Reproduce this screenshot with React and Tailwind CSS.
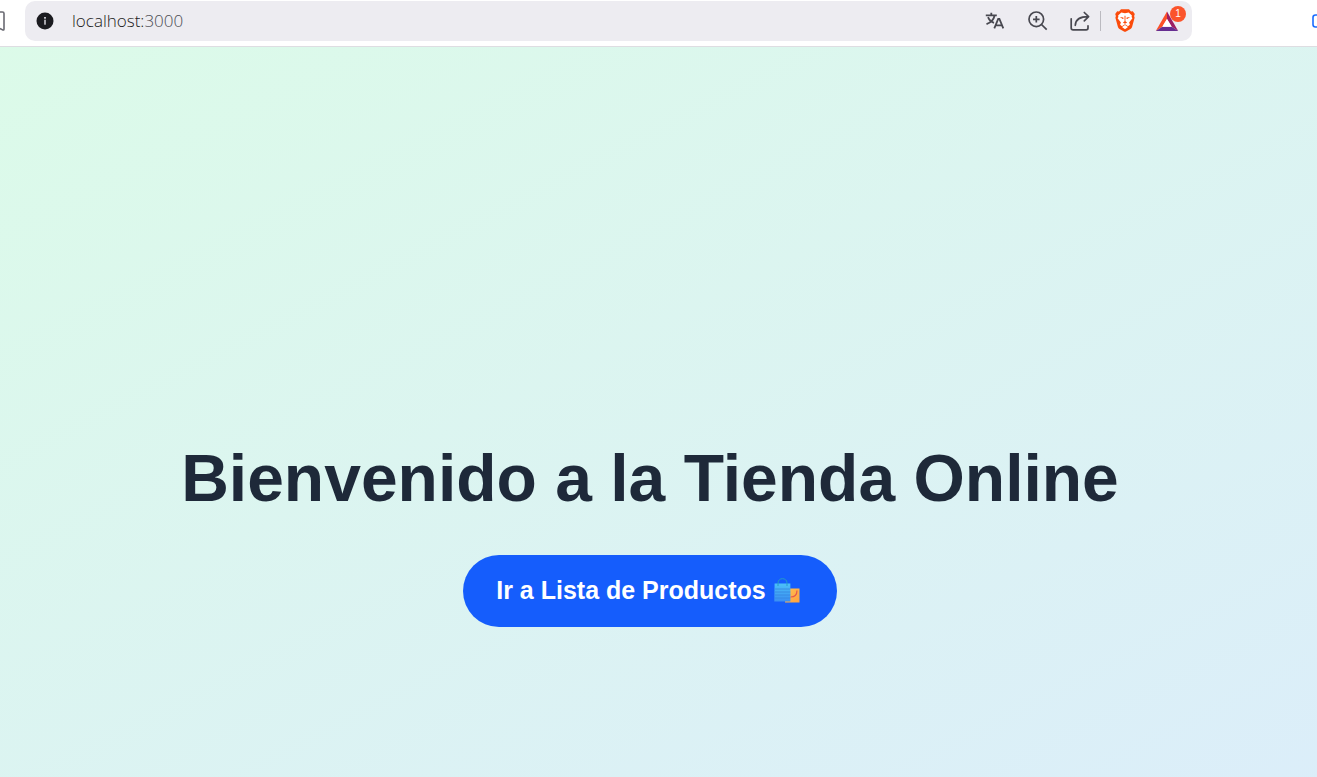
function InfoIcon() {
  return (
    <svg viewBox="0 0 18 18" className="size-[18px]" aria-hidden="true">
      <circle cx="9" cy="9" r="8.5" fill="#1b1b20" />
      <rect x="8.2" y="5" width="1.6" height="1.7" fill="#edecf1" />
      <rect x="8.2" y="7.7" width="1.6" height="5" fill="#c9c8ce" />
    </svg>
  );
}

function TranslateIcon() {
  return (
    <svg viewBox="0 0 20 20" className="size-5" fill="none" stroke="#484850" strokeWidth="1.8" aria-hidden="true">
      <path d="M.8 4.3h11M6.3 1.8v2.5M9.6 4.5C8.800 8.300 6 11.500 1.500 13.200M3 6.200C4.300 9.300 6.400 11 9 11.800" />
      <path d="M9.300 17.400l3.900-9.400h1.200l3.900 9.400M10.800 14.300h6" />
    </svg>
  );
}

function ZoomIcon() {
  return (
    <svg viewBox="0 0 20 20" className="size-5" fill="none" stroke="#484850" strokeWidth="1.700" aria-hidden="true">
      <circle cx="8.300" cy="8.300" r="7.300" />
      <path d="M13.500 13.500l5.200 5.200M8.300 5v6.600M5 8.300h6.600" />
    </svg>
  );
}

function ShareIcon() {
  return (
    <svg viewBox="0 0 20 20" className="size-5" fill="none" stroke="#484850" strokeWidth="1.700" strokeLinejoin="round" strokeLinecap="round" aria-hidden="true">
      <path d="M1.200 7.800v9.200c0 1.200.7 1.900 1.900 1.900h13c1.200 0 1.900-.7 1.900-1.900v-2.200" />
      <path d="M5.300 14.300C5.500 8.800 9 5.700 18.300 5.700M14.300 1.500l4.300 4.200-4.300 4.200" />
    </svg>
  );
}

function LionIcon() {
  return (
    <svg viewBox="0 0 20 23" className="h-[23px] w-5" aria-hidden="true">
      <path fill="#fb4b0b" d="M6 .3h8l2 2.200 1.800-.3 2 2.900-.7 2 .5 1.600-2.400 8.800c-.3 1.100-.8 1.800-1.700 2.400L10.600 22.700h-1.200l-4.900-2.800c-.9-.6-1.400-1.300-1.700-2.400L.4 8.700.9 7.100.2 5.100l2-2.900 1.800.3z" />
      <path fill="#fff" d="M6.300 3.500L10 4.200l3.700-.7 3.200 3-.3 1.500.8 1.300-3.300 4.300.8 2.200-1.900 1.500-2.400-1.700h-1.200L7 17.300l-1.900-1.500.8-2.200L2.600 9.300 3.400 8l-.3-1.500z" />
      <path fill="#fff" d="M10 16l3 1.900-3 2.400-3-2.400z" />
      <path fill="#fb4b0b" d="M4.800 7.900l3.500.7.300 1.100-.8.400zM15.200 7.900l-3.500.7-.3 1.100.8.400zM9.500 6.800h1l-.1 5.500 1.700 1.100L10 14.700l-2.100-1.300 1.700-1.100z" />
    </svg>
  );
}

function TriangleIcon() {
  return (
    <svg viewBox="0 0 24 21" className="h-[21px] w-6" aria-hidden="true">
      <path fill="#fb5028" d="M12 .5L.8 20l6.500-4.300L12 8z" />
      <path fill="#9e1f63" d="M12 .5L23.200 20l-6.500-4.300L12 8z" />
      <path fill="#662d91" d="M.8 20h22.400l-6.500-4.300H7.300z" />
      <path fill="#fff" d="M12 8l4.700 7.700H7.300z" />
    </svg>
  );
}

function BagsIcon() {
  return (
    <svg viewBox="0 0 26 26" className="h-[26px] w-[26px]" role="img" aria-label="Bolsas de compras">
      <defs>
        <linearGradient id="blueBag" x1="0" y1="0" x2="0" y2="1">
          <stop offset="0" stopColor="#4cc0f8" />
          <stop offset="1" stopColor="#3a8ff2" />
        </linearGradient>
        <linearGradient id="orangeBag" x1="0" y1="0" x2="1" y2="1">
          <stop offset="0" stopColor="#ffc052" />
          <stop offset="1" stopColor="#ffa13d" />
        </linearGradient>
      </defs>
      <path fill="url(#orangeBag)" d="M12 10.500h13.500v14H11z" />
      <path fill="none" stroke="#e5574d" strokeWidth="1.200" d="M23 12.500c0 4-2 6.500-6.500 6.500" />
      <path fill="url(#blueBag)" d="M.6 5.500h15.800v18H.3z" />
      <path stroke="#3585df" strokeWidth=".8" d="M.8 11h15.400M.8 14h15.400M.8 17h15.400M.8 20h15.400" />
      <path fill="none" stroke="#239bc8" strokeWidth="1" d="M4 8V5c0-5.800 9-5.800 9 0v3" />
    </svg>
  );
}

export default function App() {
  return (
    <div className="flex min-h-screen flex-col bg-white font-['Liberation_Sans',Arial,sans-serif]">
      <header className="flex h-[47px] items-start overflow-hidden border-b border-[#dedde2] pt-px">
        <button type="button" aria-label="Marcador" className="flex h-10 w-[25px] items-center">
          <svg viewBox="0 0 5 20" className="h-5 w-[5px]" fill="none" stroke="#6a6a72" strokeWidth="1.600" aria-hidden="true">
            <path d="M0 1h2.500Q4 1 4 2.500v15.500q0 1.500-1.400.9L0 17.500" />
          </svg>
        </button>
        <div className="flex h-10 flex-1 items-center rounded-[10px] bg-[#edecf1] pr-[3px] pl-[11px]">
          <button type="button" aria-label="Información del sitio"><InfoIcon /></button>
          <span className="ml-[18px] flex-1 font-['Open_Sans',sans-serif] text-[17px] leading-6 font-light text-[#1b1b20]">
            localhost:<span className="text-[#4c4c54]">3000</span>
          </span>
          <div className="flex items-center">
            <button type="button" aria-label="Traducir" className="mr-[23px]"><TranslateIcon /></button>
            <button type="button" aria-label="Zoom" className="mr-[22px]"><ZoomIcon /></button>
            <button type="button" aria-label="Compartir" className="mr-[10px]"><ShareIcon /></button>
            <span className="h-5 w-px bg-[#bbbac0]" />
            <button type="button" aria-label="Escudos" className="ml-[14px] pb-[2px]"><LionIcon /></button>
            <button type="button" aria-label="Recompensas" className="relative ml-5 pr-[10px]">
              <TriangleIcon />
              <span className="absolute -top-[5px] right-[3px] flex size-4 items-center justify-center rounded-full bg-[#fb542b] text-[10px] text-white">1</span>
            </button>
          </div>
        </div>
        <button type="button" aria-label="Panel lateral" className="flex h-10 w-[125px] items-center justify-end">
          <svg viewBox="0 0 5 14" className="h-[14px] w-[5px]" fill="none" stroke="#1a6dff" strokeWidth="1.600" aria-hidden="true">
            <path d="M5 1H3.500Q1 1 1 3.500v7Q1 13 3.500 13H5" />
          </svg>
        </button>
      </header>
      <main className="flex flex-1 flex-col items-center justify-end bg-linear-[153deg,#dcfce7_-11%,#dbeafe_129%] pt-4 pr-[33px] pb-[150px] pl-4">
        <h1 className="mb-[41px] text-center text-[66px] leading-[72px] font-bold text-[#1e2939]">
          Bienvenido a la Tienda Online
        </h1>
        <a href="/productos" className="flex h-[72px] items-center gap-2 rounded-full bg-[#155dfc] pr-[37px] pl-[33px] text-[25px] font-bold text-white">
          Ir a Lista de Productos
          <BagsIcon />
        </a>
      </main>
    </div>
  );
}
